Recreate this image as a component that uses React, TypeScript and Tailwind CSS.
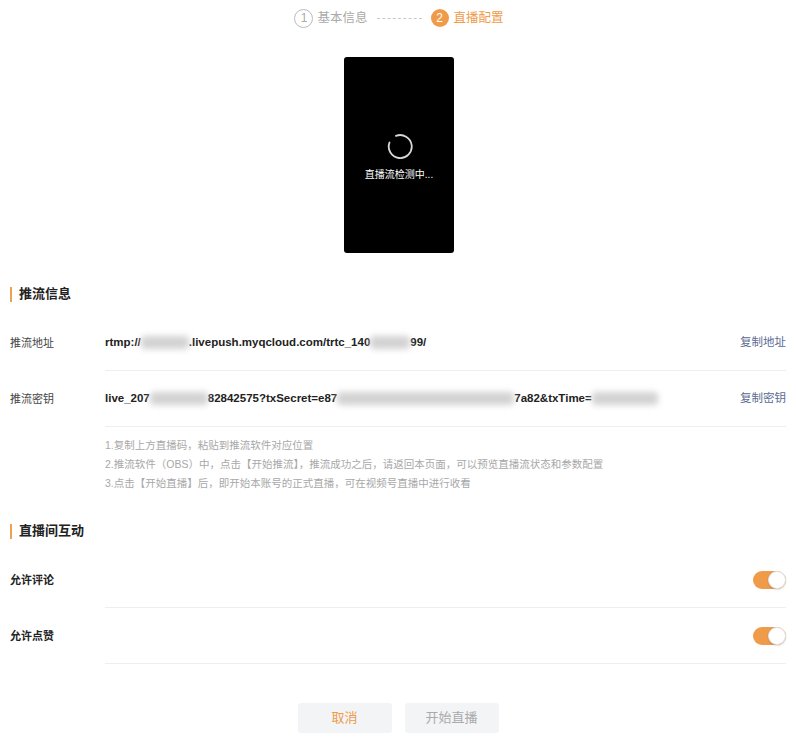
const font = "font-['Liberation_Sans','Noto_Sans_CJK_SC',sans-serif]";

const Blur = ({ w }: { w: number }) => (
  <span
    className="inline-block h-[13px] rounded bg-[#d2d2d2] blur-[3px] align-middle"
    style={{ width: w }}
  />
);

const SectionTitle = ({ title }: { title: string }) => (
  <div className="flex items-center h-5">
    <span className="w-[2px] h-[15px] bg-[#f0a050]" />
    <span className="ml-[7px] text-[13px] font-bold text-[#222]">{title}</span>
  </div>
);

const Row = ({
  label,
  bold,
  children,
  right,
}: {
  label: string;
  bold?: boolean;
  children?: React.ReactNode;
  right?: React.ReactNode;
}) => (
  <div className="flex">
    <div
      className={`w-[95px] shrink-0 flex items-center text-[11px] ${
        bold ? "font-bold text-[#222]" : "text-[#444]"
      }`}
    >
      {label}
    </div>
    <div className="flex-1 h-[56px] flex items-center justify-between border-b border-[#eeeeee]">
      <div className="flex items-center text-[11.5px] font-bold text-[#222] whitespace-nowrap">
        {children}
      </div>
      {right}
    </div>
  </div>
);

const Toggle = () => (
  <div className="w-[33px] h-[18px] rounded-full bg-[#ef9b4a] flex items-center justify-end">
    <div className="w-[18px] h-[18px] rounded-full bg-white border border-[#e2e2e2] shadow-[0_1px_2px_rgba(0,0,0,0.15)]" />
  </div>
);

export default function App() {
  return (
    <div className={`w-[796px] h-[743px] bg-white ${font} px-[10px]`}>
      {/* steps */}
      <div className="h-[36px] flex items-center justify-center pl-[2px]">
        <div className="flex items-center gap-[4px]">
          <span className="w-[19px] h-[19px] rounded-full border border-[#bbbbbb] text-[#aaaaaa] text-[12px] flex items-center justify-center">
            1
          </span>
          <span className="text-[12.5px] text-[#aaaaaa]">基本信息</span>
        </div>
        <div className="w-[45px] mx-[9px] border-t border-dashed border-[#c8c8c8]" />
        <div className="flex items-center gap-[5px]">
          <span className="w-[18px] h-[18px] rounded-full bg-[#ef9b4a] text-white text-[12px] flex items-center justify-center">
            2
          </span>
          <span className="text-[12.5px] text-[#ef9b4a]">直播配置</span>
        </div>
      </div>

      {/* preview */}
      <div className="flex justify-center mt-[21px]">
        <div className="w-[110px] h-[196px] bg-black rounded-[3px] flex flex-col items-center pt-[76px] ml-[2px]">
          <svg width="28" height="28" viewBox="0 0 28 28">
            <path
              d="M 4.5 9.5 A 11.5 11.5 0 1 0 11 2.9"
              fill="none"
              stroke="#d8d8d8"
              strokeWidth="1.8"
              strokeLinecap="round"
            />
          </svg>
          <span className="mt-[6px] text-[10px] text-white">直播流检测中...</span>
        </div>
      </div>

      {/* push info */}
      <div className="mt-[31px]">
        <SectionTitle title="推流信息" />
      </div>
      <div className="mt-[11px]">
        <Row label="推流地址" right={<span className="text-[11.5px] text-[#5b6b94]">复制地址</span>}>
          <span>rtmp://</span>
          <Blur w={48} />
          <span>.livepush.myqcloud.com/trtc_140</span>
          <Blur w={40} />
          <span>99/</span>
        </Row>
        <Row label="推流密钥" right={<span className="text-[11.5px] text-[#5b6b94]">复制密钥</span>}>
          <span>live_207</span>
          <Blur w={58} />
          <span>82842575?txSecret=e87</span>
          <Blur w={177} />
          <span>7a82&amp;txTime=</span>
          <Blur w={66} />
        </Row>
      </div>
      <div className="ml-[95px] mt-[9px] text-[10.5px] leading-[19px] text-[#a8a8a8]">
        <p>1.复制上方直播码，粘贴到推流软件对应位置</p>
        <p>2.推流软件（OBS）中，点击【开始推流】，推流成功之后，请返回本页面，可以预览直播流状态和参数配置</p>
        <p>3.点击【开始直播】后，即开始本账号的正式直播，可在视频号直播中进行收看</p>
      </div>

      {/* interaction */}
      <div className="mt-[28px]">
        <SectionTitle title="直播间互动" />
      </div>
      <div className="mt-[11px]">
        <Row label="允许评论" bold right={<Toggle />} />
        <Row label="允许点赞" bold right={<Toggle />} />
      </div>

      {/* buttons */}
      <div className="mt-[39px] flex justify-center gap-[13px]">
        <button className="w-[94px] h-[30px] rounded-[3px] bg-[#f3f4f6] text-[13px] text-[#ef9b4a]">
          取消
        </button>
        <button className="w-[94px] h-[30px] rounded-[3px] bg-[#f3f4f6] text-[13px] text-[#aaaaaa]">
          开始直播
        </button>
      </div>
    </div>
  );
}
